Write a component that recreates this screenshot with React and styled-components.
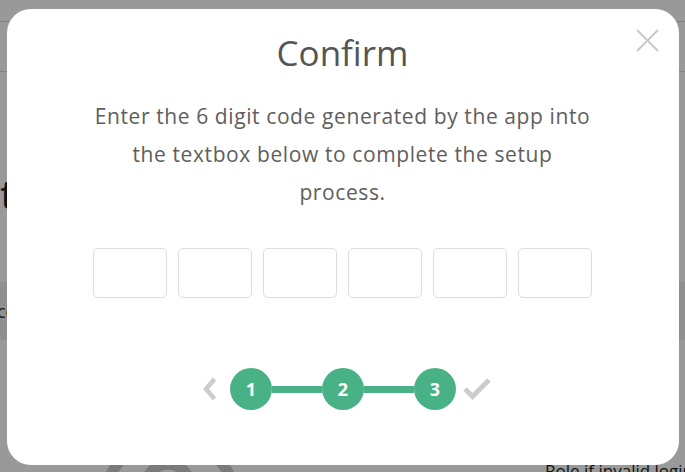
import React from 'react';
import styled, { createGlobalStyle } from 'styled-components';

//? Confirm step of the 2FA setup, shown as a modal over the settings page

const GlobalStyle = createGlobalStyle`
  html, body {
    margin: 0;
    padding: 0;
    background: #fff;
    font-family: 'Open Sans', Lato, sans-serif;
  }
  * {
    box-sizing: border-box;
  }
`;

const CloseIcon = () => (
  <svg width='23' height='23' viewBox='0 0 23 23'>
    <path d='M1 1 L22 22 M22 1 L1 22' stroke='#c9c9c9' strokeWidth='2' fill='none' />
  </svg>
);

const PrevIcon = () => (
  <svg width='15' height='24' viewBox='0 0 15 24'>
    <path d='M12.5 2 L4 12 L12.5 22' stroke='#cccccc' strokeWidth='4.5' fill='none' />
  </svg>
);

const CheckIcon = () => (
  <svg width='28' height='22' viewBox='0 0 28 22'>
    <path d='M2 11 L9.5 18.5 L26 2' stroke='#cccccc' strokeWidth='5' fill='none' />
  </svg>
);

const AvatarIcon = () => (
  <svg width='160' height='150' viewBox='0 0 160 150'>
    <circle cx='80' cy='80' r='66' stroke='#cccccc' strokeWidth='11' fill='none' />
    <circle cx='78' cy='62' r='22' stroke='#cccccc' strokeWidth='11' fill='none' />
  </svg>
);

const steps = [1, 2, 3];

const App = () => {
  return (
    <React.Fragment>
      <GlobalStyle />
      <Page>
        <TopStrip />
        <NavBar />
        <PageTitle>tfa</PageTitle>
        <Band>
          <BandText>code</BandText>
        </Band>
        <Footer>
          <AvatarIcon />
          <FooterText>Role if invalid login</FooterText>
        </Footer>
      </Page>
      <Overlay>
        <Modal>
          <CloseButton aria-label='Close'>
            <CloseIcon />
          </CloseButton>
          <Title>Confirm</Title>
          <Text>
            Enter the 6 digit code generated by the app into the textbox
            below to complete the setup process.
          </Text>
          <CodeRow>
            {Array.from({ length: 6 }).map((_, i) => (
              <CodeInput key={i} maxLength={1} inputMode='numeric' />
            ))}
          </CodeRow>
          <Stepper>
            <NavButton aria-label='Previous' side='prev'>
              <PrevIcon />
            </NavButton>
            {steps.map((step, i) => (
              <React.Fragment key={step}>
                {i > 0 && <Connector />}
                <Step>{step}</Step>
              </React.Fragment>
            ))}
            <NavButton aria-label='Done' side='next'>
              <CheckIcon />
            </NavButton>
          </Stepper>
        </Modal>
      </Overlay>
    </React.Fragment>
  );
};

export default App;

const Page = styled.div`
  width: 100%;
  height: 472px;
  overflow: hidden;
  display: flex;
  flex-direction: column;
  color: #1b2333;
`;

const TopStrip = styled.div`
  height: 22px;
  flex-shrink: 0;
  border-bottom: 1px solid #d8d8d8;
`;

const NavBar = styled.div`
  height: 50px;
  flex-shrink: 0;
  border-bottom: 1px solid #d8d8d8;
`;

const PageTitle = styled.h1`
  margin: 102px 0 0 0;
  font-family: Lato, sans-serif;
  font-size: 40px;
  font-weight: 400;
  line-height: 40px;
  white-space: nowrap;
  color: #17202e;
`;

const Band = styled.div`
  margin-top: 68px;
  height: 58px;
  flex-shrink: 0;
  background: #eeeeee;
  display: flex;
  align-items: center;
`;

const BandText = styled.span`
  font-size: 18px;
  color: #333;
  margin-left: -3px;
`;

const Footer = styled.div`
  margin-top: 84px;
  display: flex;
  align-items: flex-start;
  justify-content: space-between;
  padding-left: 90px;
`;

const FooterText = styled.span`
  margin-top: 35px;
  font-size: 17px;
  color: #222;
  white-space: nowrap;
  margin-right: -8px;
`;

const Overlay = styled.div`
  position: fixed;
  inset: 0;
  background: rgba(0, 0, 0, 0.4);
  display: flex;
  align-items: center;
  justify-content: center;
`;

const Modal = styled.div`
  position: relative;
  width: 672px;
  height: 456px;
  margin-top: 2px;
  background: #fff;
  border-radius: 24px;
  padding-top: 23px;
  display: flex;
  flex-direction: column;
  align-items: center;
`;

const CloseButton = styled.button`
  position: absolute;
  top: 20px;
  right: 20px;
  border: none;
  background: none;
  padding: 0;
  cursor: pointer;
  display: flex;
`;

const Title = styled.h2`
  margin: 0;
  font-size: 35px;
  line-height: 42px;
  font-weight: 400;
  color: #555;
`;

const Text = styled.p`
  margin: 23px 0 0 0;
  max-width: 502px;
  text-align: center;
  font-size: 21px;
  letter-spacing: 0.6px;
  line-height: 38px;
  color: #5e5e5e;
`;

const CodeRow = styled.div`
  margin-top: 37px;
  display: flex;
  gap: 11px;
`;

const CodeInput = styled.input`
  width: 74px;
  height: 50px;
  border: 1px solid #dddddd;
  border-radius: 5px;
  text-align: center;
  font-size: 24px;
  outline: none;
  &:focus {
    border-color: #48b185;
  }
`;

const Stepper = styled.div`
  margin-top: 70px;
  margin-left: 8px;
  display: flex;
  align-items: center;
`;

const NavButton = styled.button`
  border: none;
  background: none;
  padding: 0;
  margin: ${({ side }) => (side === 'prev' ? '0 13px 0 0' : '0 0 0 7px')};
  display: flex;
  cursor: pointer;
`;

const Step = styled.div`
  width: 42px;
  height: 42px;
  border-radius: 50%;
  background: #48b185;
  color: #fff;
  display: flex;
  align-items: center;
  justify-content: center;
  font-weight: 700;
  font-size: 18px;
`;

const Connector = styled.div`
  width: 50px;
  height: 7px;
  background: #48b185;
`;
